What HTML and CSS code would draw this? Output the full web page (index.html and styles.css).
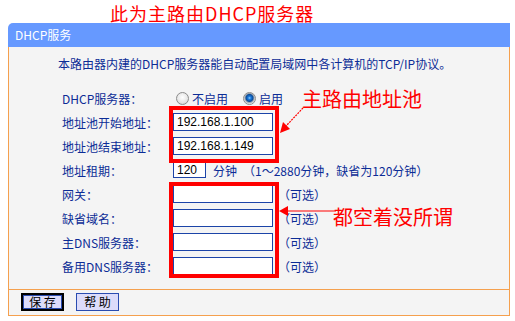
FILE: index.html
```html
<!DOCTYPE html>
<html lang="zh-CN">
<head>
    <meta charset="UTF-8">
    <title>DHCP服务</title>
    <link rel="stylesheet" href="styles.css">
</head>
<body>
    <div class="page">
        <div class="title">此为主路由DHCP服务器</div>
        <div class="panel">
            <div class="panel-head">DHCP服务</div>
            <div class="panel-body">
                <div class="desc">本路由器内建的DHCP服务器能自动配置局域网中各计算机的TCP/IP协议。</div>
                <div class="form">
                    <div class="label">DHCP服务器：</div>
                    <div class="field">
                        <label class="radio"><input type="radio" name="dhcp">不启用</label>
                        <label class="radio"><input type="radio" name="dhcp" checked>启用</label>
                    </div>

                    <div class="label">地址池开始地址：</div>
                    <div class="field"><input class="text" type="text" value="192.168.1.100"></div>

                    <div class="label">地址池结束地址：</div>
                    <div class="field"><input class="text" type="text" value="192.168.1.149"></div>

                    <div class="label">地址租期：</div>
                    <div class="field">
                        <input class="text short" type="text" value="120">
                        <span class="unit">分钟</span>
                        <span class="hint">（1～2880分钟，缺省为120分钟）</span>
                    </div>

                    <div class="label">网关：</div>
                    <div class="field"><input class="text" type="text"><span class="opt">（可选）</span></div>

                    <div class="label">缺省域名：</div>
                    <div class="field"><input class="text" type="text"><span class="opt">（可选）</span></div>

                    <div class="label">主DNS服务器：</div>
                    <div class="field"><input class="text" type="text"><span class="opt">（可选）</span></div>

                    <div class="label">备用DNS服务器：</div>
                    <div class="field"><input class="text" type="text"><span class="opt">（可选）</span></div>
                </div>
            </div>
            <div class="panel-foot">
                <button class="btn btn-default">保 存</button>
                <button class="btn">帮 助</button>
            </div>
        </div>

        <!-- annotations drawn over the screenshot -->
        <svg class="marks" width="515" height="321" viewBox="0 0 515 321">
            <rect x="171" y="108" width="106" height="53" fill="none" stroke="#f00" stroke-width="4"/>
            <rect x="171" y="184" width="106" height="92" fill="none" stroke="#f00" stroke-width="4"/>
            <line x1="303" y1="108" x2="286" y2="126" stroke="#f00" stroke-width="1.2" stroke-dasharray="2 1"/>
            <polygon points="280,133 283,122 290,129" fill="#f00"/>
            <line x1="336" y1="211" x2="287" y2="211" stroke="#f00" stroke-width="1.2"/>
            <polygon points="279,211 288,206 288,216" fill="#f00"/>
        </svg>
        <div class="note note-pool">主路由地址池</div>
        <div class="note note-empty">都空着没所谓</div>
    </div>
</body>
</html>
```

FILE: styles.css
```css
body {
    margin: 0;
    background-color: #fff;
    font-family: "Noto Sans CJK SC", "DejaVu Sans", sans-serif;
    font-size: 12px;
    color: #0c2c96;
}
.page {
    position: relative;
    width: 515px;
    height: 321px;
}
.title {
    height: 23px;
    padding-left: 110px;
    font-size: 18px;
    line-height: 26px;
    letter-spacing: 1px;
    color: #f00;
}
.panel {
    width: 502px;
    margin-left: 8px;
}
.panel-head {
    position: relative;
    height: 24px;
    padding-left: 7px;
    line-height: 24px;
    color: #fff;
    background-color: #6699ff;
    border-top-left-radius: 5px;
}
.panel-body {
    height: 242px;
    border-left: 1px solid #f5a04e;
    border-right: 1px solid #f5a04e;
    background-color: #f4f4f4;
}
.desc {
    padding: 9px 0 0 49px;
    line-height: 16px;
    height: 16px;
}
.form {
    display: grid;
    grid-template-columns: 111px auto;
    grid-auto-rows: 24px;
    align-items: center;
    margin-top: 14px;
    padding-left: 53px;
}
.field {
    display: flex;
    align-items: center;
}
.radio {
    display: flex;
    align-items: center;
    margin-right: 12px;
}
.radio input {
    appearance: none;
    width: 13px;
    height: 13px;
    margin: 0 3px 0 3px;
    border: 1px solid #8c8c8c;
    border-radius: 50%;
    background: radial-gradient(circle at 50% 40%, #fff 0, #e6e6e6 60%, #c4c4c4 100%);
}
.radio input:checked {
    background: radial-gradient(circle at 50% 45%, #8fd0ff 0, #1a7be0 1.5px, #0b4a96 3.5px, #9aa4b0 4.5px, #f2f2f2 6px);
}
.text {
    box-sizing: border-box;
    width: 100px;
    height: 18px;
    margin: 0;
    padding: 0 3px;
    border: 1px solid #1c44a8;
    background-color: #fff;
    font-family: "Liberation Sans", sans-serif;
    font-size: 12px;
    color: #000;
}
.text.short {
    width: 33px;
    height: 16px;
}
.unit {
    margin-left: 7px;
}
.hint {
    margin-left: 6px;
}
.opt {
    margin-left: 5px;
}
.panel-foot {
    height: 27px;
    padding: 3px 0 0 12px;
    box-sizing: border-box;
    border: 1px solid #f5a04e;
    background-color: #f4f4f4;
    display: flex;
    align-items: flex-start;
    gap: 12px;
}
.btn {
    box-sizing: border-box;
    width: 43px;
    height: 18px;
    padding: 0;
    border: 1px solid #2a4cb0;
    background-color: #dcdcfa;
    font-family: "Noto Sans CJK SC", sans-serif;
    font-size: 12px;
    line-height: 14px;
    color: #000;
}
.btn-default {
    border: 2px solid #000;
    box-shadow: inset 0 0 0 1px #2a4cb0;
}
.marks {
    position: absolute;
    top: 0;
    left: 0;
}
.note {
    position: absolute;
    font-size: 20px;
    line-height: 24px;
    color: #f00;
}
.note-pool {
    left: 302px;
    top: 87px;
}
.note-empty {
    left: 333px;
    top: 205px;
}
```
